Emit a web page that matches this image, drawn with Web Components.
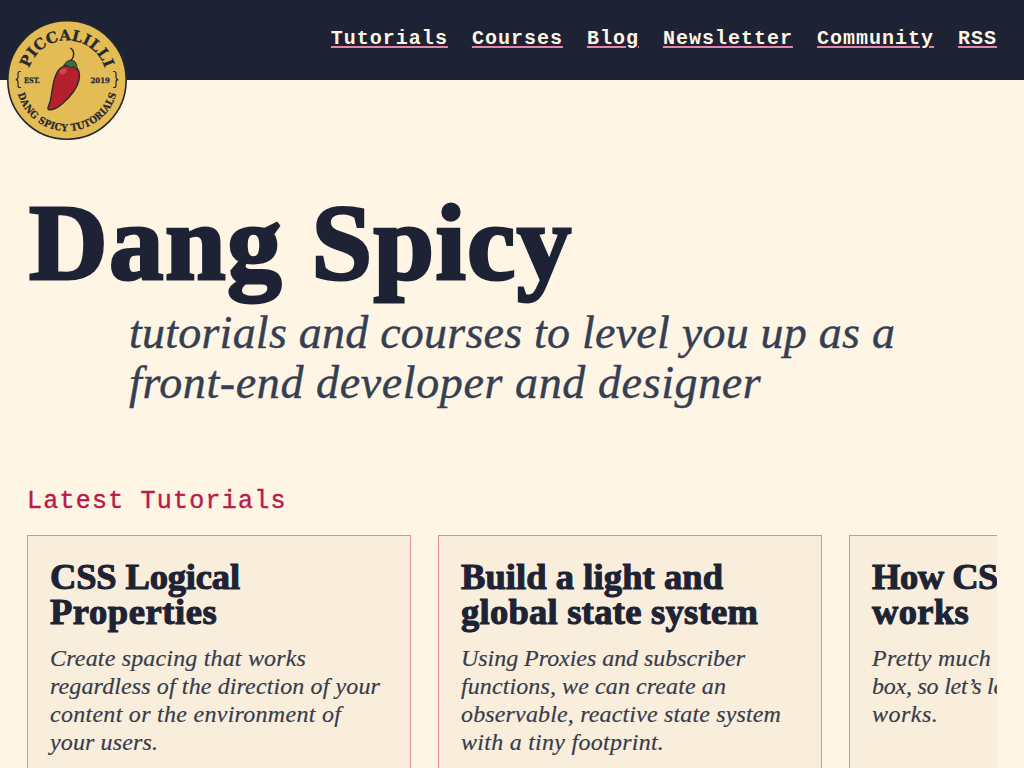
<!DOCTYPE html>
<html lang="en">
<head>
<meta charset="utf-8">
<title>Piccalilli</title>
<style>
html, body { margin: 0; height: 768px; overflow: hidden; background: #fff5e4; }
body { font-family: "Liberation Serif", serif; color: #1d2334; }
</style>
</head>
<body>
<piccalilli-page></piccalilli-page>
<script>
function define(name, html, after) {
  const tpl = document.createElement('template');
  tpl.innerHTML = html;
  customElements.define(name, class extends HTMLElement {
    connectedCallback() {
      if (this.shadowRoot) return;
      this.attachShadow({ mode: 'open' }).append(tpl.content.cloneNode(true));
      if (after) after(this);
    }
  });
}

/* One line of text, tracked so that it fills the measure given in "w". */
define('text-line', `<style>
  :host { display: block; width: max-content; white-space: pre; }
</style><slot></slot>`, el => {
  const w = +el.getAttribute('w');
  if (!w) return;
  const natural = el.getBoundingClientRect().width;
  el.style.letterSpacing = ((w - natural) / (el.textContent.length - 0.5)).toFixed(3) + 'px';
});

define('site-logo', `<style>
  :host { display: block; width: 120px; height: 120px; }
  svg { display: block; overflow: visible; }
  text { font-family: "DejaVu Serif", serif; font-weight: 700; fill: #262a31; stroke: #262a31; stroke-width: .25px; }
</style>
<svg width="120" height="120" viewBox="-60 -60 120 120" role="img">
  <defs>
    <path id="top" d="M-37.8 -11.8A39.6 39.6 0 0 1 37.8 -11.8"/>
    <path id="bottom" d="M-49.2 14.1A51.2 51.2 0 0 0 49.2 14.1"/>
  </defs>
  <circle r="59.2" fill="#e3bc55" stroke="#26272c" stroke-width="1.6"/>
  <text font-size="15" textLength="100"><textPath href="#top" textLength="100" lengthAdjust="spacing">PICCALILLI</textPath></text>
  <text font-size="9.8" style="font-family:'DejaVu Serif Condensed','DejaVu Serif',serif" textLength="132"><textPath href="#bottom" textLength="132" lengthAdjust="spacing">DANG SPICY TUTORIALS</textPath></text>
  <text x="-43" y="2.6" font-size="7.4" textLength="16" lengthAdjust="spacingAndGlyphs">EST.</text>
  <text x="23.5" y="2.6" font-size="7.4" textLength="19.5" lengthAdjust="spacingAndGlyphs">2019</text>
  <g fill="none" stroke="#262a31" stroke-width="1.2">
    <path d="M-46 -8.5H-47Q-49 -8.5 -49 -6.5V-2.5Q-49 -.6 -51.2 -.3Q-49 0 -49 2V5.5Q-49 7.5 -47 7.5H-46"/>
    <path d="M46 -8.5H47Q49 -8.5 49 -6.5V-2.5Q49 -.6 51.2 -.3Q49 0 49 2V5.5Q49 7.5 47 7.5H46"/>
  </g>
  <path d="M-9.7 -8C-6 -14 0 -15.5 6 -14C11 -12 13.5 -7 12 0C10 9 2 18 -5 24C-9 27.5 -14 30.5 -18.5 29.5C-20.5 28.5 -17.5 25 -16.5 20C-14.5 11 -14.5 0 -9.7 -8Z" fill="#b5212a" stroke="#262a31" stroke-width="1.4"/>
  <ellipse cx="-4" cy="-8.5" rx="3.8" ry="2.7" fill="#d0464c" transform="rotate(-28 -4 -8.5)"/>
  <path d="M-3.4 -14.2C-2 -17.5 1 -19.6 4.2 -20C8.4 -19.2 10.4 -16 9.8 -10.5L6.6 -13.4L3.4 -12L.8 -14.4Z" fill="#3e6b3c" stroke="#262a31" stroke-width="1"/>
  <path d="M4.5 -20C8 -24 7 -30 3.8 -31.6" fill="none" stroke="#262a31" stroke-width="1.5" stroke-linecap="round"/>
</svg>`);

define('nav-link', `<style>
  :host { display: block; font: 700 20px/26px "Liberation Mono", monospace; color: #fff5e4; }
  a { color: inherit; text-decoration: underline; text-decoration-color: #e683a6;
      text-decoration-thickness: 2px; text-underline-offset: 2px; letter-spacing: 1px; }
</style><a><slot></slot></a>`);

define('site-header', `<style>
  :host { display: flex; justify-content: space-between; box-sizing: border-box; height: 80px;
          padding: 19.5px 27px 0 7px; background: #1d2334; }
  nav { display: flex; gap: 24px; padding-top: 6.5px; }
</style>
<site-logo></site-logo>
<nav><nav-link>Tutorials</nav-link><nav-link>Courses</nav-link><nav-link>Blog</nav-link><nav-link>Newsletter</nav-link><nav-link>Community</nav-link><nav-link>RSS</nav-link></nav>`);

define('page-intro', `<style>
  :host { display: block; padding: 108px 27px 0; }
  h1 { margin: 0; font: 700 109px/110px "Liberation Serif", serif; -webkit-text-stroke: 3px #1d2334; padding-left: 2px; }
  p { margin: 10px 0 0 102px; font: italic 46px/50px "Liberation Serif", serif; color: #343f53; -webkit-text-stroke: .4px #343f53; }
</style>
<h1><text-line w="543">Dang Spicy</text-line></h1>
<p><text-line w="766">tutorials and courses to level you up as a</text-line><text-line w="632">front-end developer and designer</text-line></p>`);

define('tutorial-card', `<style>
  :host { display: block; flex: 0 0 384px; box-sizing: border-box; height: 233px;
          border: 1px solid #e38ba1; border-bottom: 0; background: #f9eedb; padding: 23px 22px 0; }
  h3 { margin: 0; font: 700 36.5px/35px "Liberation Serif", serif; -webkit-text-stroke: 1.1px #1d2334; }
  p { margin: 15px 0 0; font: italic 24px/28px "Liberation Serif", serif; color: #373c4d; -webkit-text-stroke: .2px #373c4d; }
</style>
<h3><slot name="title"></slot></h3><p><slot></slot></p>`);

define('latest-tutorials', `<style>
  :host { display: block; padding: 79px 27px 0; }
  h2 { margin: 0; font: 400 25px/30px "Liberation Mono", monospace; color: #b81a4b; -webkit-text-stroke: .4px #b81a4b; }
  .reel { display: flex; gap: 27px; margin-top: 18px; overflow: hidden; }
</style>
<h2><text-line w="259">Latest Tutorials</text-line></h2>
<div class="reel">
  <tutorial-card>
    <text-line slot="title" w="190">CSS Logical</text-line><text-line slot="title" w="167">Properties</text-line>
    <text-line w="256">Create spacing that works</text-line><text-line w="330">regardless of the direction of your</text-line><text-line w="291">content or the environment of</text-line><text-line w="108">your users.</text-line>
  </tutorial-card>
  <tutorial-card>
    <text-line slot="title" w="262">Build a light and</text-line><text-line slot="title" w="297">global state system</text-line>
    <text-line w="284">Using Proxies and subscriber</text-line><text-line w="265">functions, we can create an</text-line><text-line w="320">observable, reactive state system</text-line><text-line w="203">with a tiny footprint.</text-line>
  </tutorial-card>
  <tutorial-card>
    <text-line slot="title" w="146">How CSS</text-line><text-line slot="title" w="97">works</text-line>
    <text-line w="119">Pretty much</text-line><text-line w="132">box, so let’s le</text-line><text-line w="66">works.</text-line>
  </tutorial-card>
</div>`);

define('piccalilli-page', `<style>:host { display: block; height: 768px; overflow: hidden; }</style>
<site-header></site-header>
<main><page-intro></page-intro><latest-tutorials></latest-tutorials></main>`);
</script>
</body>
</html>
